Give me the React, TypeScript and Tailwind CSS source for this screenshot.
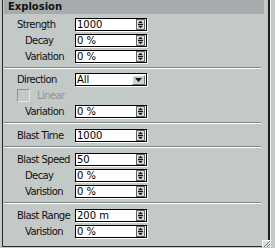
import React from 'react';

const Spinner = () => (
  <svg width="9" height="11" viewBox="0 0 9 11" className="block">
    <rect x="0.5" y="0.5" width="8" height="10" fill="#d6dad9" stroke="#5f6463" />
    <path d="M4.5 1.8 L7 4.3 L2 4.3 Z" fill="#111" />
    <path d="M2 6.7 L7 6.7 L4.5 9.2 Z" fill="#111" />
    <line x1="2" y1="5.5" x2="7" y2="5.5" stroke="#111" strokeWidth="1" />
  </svg>
);

const Field = ({ value }: { value: string }) => (
  <div className="w-[72px] h-[13px] flex items-center bg-white border border-black shadow-[1px_1px_0_#ffffff]">
    <span className="flex-1 pl-[1px] text-[10px] leading-none text-black">{value}</span>
    <div className="mr-[1px]">
      <Spinner />
    </div>
  </div>
);

const Row = ({ label, value, sub }: { label: string; value: string; sub?: boolean }) => (
  <div className="flex items-center h-[13px]">
    <div className={`w-[72px] text-[10px] tracking-[-0.6px] leading-none text-[#111] ${sub ? 'pl-[22px]' : 'pl-[14px]'}`}>{label}</div>
    <Field value={value} />
  </div>
);

const Separator = () => (
  <div className="ml-[1px] w-[257px] border-t border-[#7d8282] border-b border-b-white" />
);

export default function App() {
  return (
    <div
      className="w-[275px] h-[248px] bg-[#c3c9c7] relative overflow-hidden"
      style={{ fontFamily: '"DejaVu Sans", Verdana, sans-serif' }}
    >
      <div className="ml-[2px] w-[268px] h-[247px] border-l border-l-[#2a2a2a] border-r-2 border-r-[#1e1e1e] border-b border-b-[#2a2a2a] shadow-[1px_0_0_#f2f4f3]">
        <div className="ml-[1px] w-[260px] h-[14px] bg-[#a6abad] flex items-center pl-[4px]">
          <span className="text-[10px] font-bold leading-none text-[#111]">Explosion</span>
        </div>

        <div className="flex flex-col gap-[3px] pt-[4px] pb-[4px]">
          <Row label="Strength" value="1000" />
          <Row label="Decay" value="0 %" sub />
          <Row label="Variation" value="0 %" sub />
        </div>
        <Separator />

        <div className="flex flex-col gap-[3px] pt-[4px] pb-[4px]">
          <div className="flex items-center h-[13px]">
            <div className="w-[72px] pl-[14px] text-[10px] tracking-[-0.6px] leading-none text-[#111]">Direction</div>
            <div className="w-[72px] h-[13px] flex items-center bg-white border border-black shadow-[1px_1px_0_#ffffff]">
              <span className="flex-1 pl-[1px] text-[10px] leading-none text-black">All</span>
              <div className="mr-[1px] w-[13px] h-[10px] bg-[#cfd3d2] border border-[#6f7473] border-t-white border-l-white flex items-center justify-center">
                <svg width="7" height="4" viewBox="0 0 7 4">
                  <path d="M0 0 L7 0 L3.5 4 Z" fill="#111" />
                </svg>
              </div>
            </div>
          </div>
          <div className="flex items-center h-[13px]">
            <div className="ml-[14px] w-[13px] h-[13px] border border-[#8c9191] border-r-[#e4e7e6] border-b-[#e4e7e6] bg-[#c3c9c7]" />
            <span className="ml-[7px] text-[10px] tracking-[-0.6px] leading-none text-[#8f9494]">Linear</span>
          </div>
          <Row label="Variation" value="0 %" sub />
        </div>
        <Separator />

        <div className="flex flex-col gap-[3px] pt-[5px] pb-[4px]">
          <Row label="Blast Time" value="1000" />
        </div>
        <Separator />

        <div className="flex flex-col gap-[3px] pt-[5px] pb-[4px]">
          <Row label="Blast Speed" value="50" />
          <Row label="Decay" value="0 %" sub />
          <Row label="Varistion" value="0 %" sub />
        </div>
        <Separator />

        <div className="flex flex-col gap-[3px] pt-[5px] pb-[4px]">
          <Row label="Blast Range" value="200 m" />
          <Row label="Varistion" value="0 %" sub />
        </div>
      </div>

      {/* resize grip */}
      <div className="absolute left-[262px] top-[240px] w-[8px] h-[7px] bg-[#d8dcdb] border-t border-l border-white">
        <svg width="7" height="6" viewBox="0 0 7 6" className="block">
          <line x1="1" y1="6" x2="7" y2="0" stroke="#7d8282" />
          <line x1="4" y1="6" x2="7" y2="3" stroke="#7d8282" />
        </svg>
      </div>
    </div>
  );
}
